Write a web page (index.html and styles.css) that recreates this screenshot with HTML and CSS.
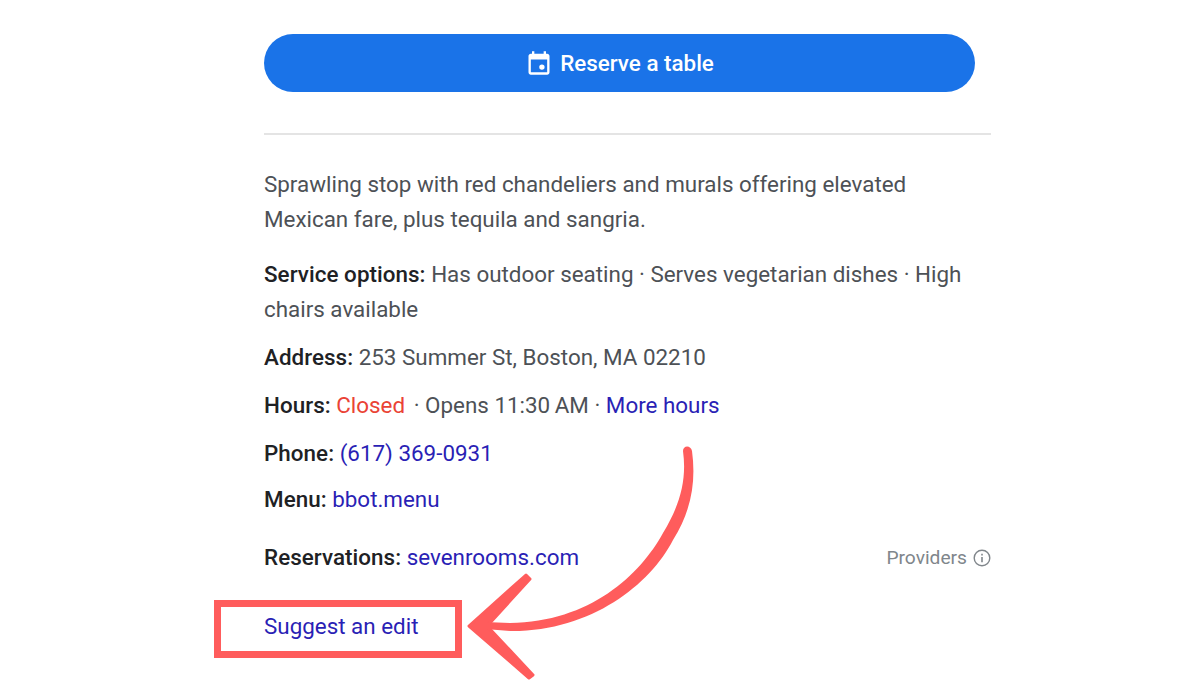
FILE: index.html
```html
<!DOCTYPE html>
<html lang="en">
<head>
    <meta charset="UTF-8">
    <title>Restaurant Details</title>
    <link rel="stylesheet" href="styles.css">
</head>
<body>
    <div class="panel">
        <a class="reserve-btn" href="#">
            <svg class="cal-icon" viewBox="0 0 24 24" width="28" height="28">
                <path fill="#fff" d="M19 4h-1V2h-2v2H8V2H6v2H5c-1.1 0-2 .9-2 2v14c0 1.100.9 2 2 2h14c1.100 0 2-.9 2-2V6c0-1.100-.9-2-2-2zm0 16H5V9h14v11z"/>
                <circle fill="#fff" cx="14.500" cy="15.500" r="2.300"/>
            </svg>
            Reserve a table
        </a>
        <hr class="divider">
        <p class="desc">Sprawling stop with red chandeliers and murals offering elevated Mexican fare, plus tequila and sangria.</p>
        <p class="row service"><b>Service options:</b> Has outdoor seating · Serves vegetarian dishes · High chairs available</p>
        <p class="row"><b>Address:</b> 253 Summer St, Boston, MA 02210</p>
        <p class="row"><b>Hours:</b> <span class="closed">Closed</span> · Opens 11:30&thinsp;AM · <a href="#">More hours</a></p>
        <p class="row"><b>Phone:</b> <a href="#">(617) 369-0931</a></p>
        <p class="row menu"><b>Menu:</b> <a href="#">bbot.menu</a></p>
        <div class="row reservations">
            <p><b>Reservations:</b> <a href="#">sevenrooms.com</a></p>
            <span class="providers">Providers
                <svg viewBox="0 0 18 18" width="18" height="18">
                    <circle cx="9" cy="9" r="7.800" fill="none" stroke="#80868b" stroke-width="1.400"/>
                    <path d="M8.200 8h1.600v5.200H8.200zM8.200 4.800h1.600v1.700H8.200z" fill="#80868b"/>
                </svg>
            </span>
        </div>
        <p class="suggest"><a href="#">Suggest an edit</a></p>
    </div>

    <!-- red annotation on top of the page -->
    <div class="mark-box"></div>
    <svg class="mark-arrow" viewBox="0 0 1200 700" width="1200" height="700">
        <path d="M683 451C683 445 691 445 692 451C696 480 692 510 673 540C650 585 590 632 510 631L485 629L485 622L510 623C590 622 640 575 663 533C680 505 687 480 683 451Z"/>
        <path class="head" d="M526 575L469 626L529 678L533 675L489 628L489 624L530 579Z"/>
    </svg>
</body>
</html>
```

FILE: styles.css
```css
body {
    font-family: Roboto, Arial, sans-serif;
    background-color: #fff;
    margin: 0;
    color: #4d5156;
    font-size: 22.400px;
    overflow: hidden;
}

.panel {
    width: 727px;
    margin-left: 264px;
    padding-top: 33.500px;
}

a {
    color: #2a1fb5;
    text-decoration: none;
}

b {
    color: #202124;
    font-weight: 500;
    letter-spacing: 0.050px;
}

p {
    margin: 0;
}

.reserve-btn {
    display: flex;
    align-items: center;
    justify-content: center;
    gap: 7px;
    width: 711px;
    height: 58px;
    border-radius: 29px;
    background-color: #1a73e8;
    color: #fff;
    font-weight: 500;
    font-size: 22.400px;
}

.divider {
    border: none;
    height: 2px;
    background-color: #e4e4e4;
    margin: 41.500px 0 32px;
}

.desc {
    width: 680px;
    line-height: 35px;
}

.row {
    margin-top: 13px;
    line-height: 35px;
}

.service {
    margin-top: 20px;
}

.menu {
    margin-top: 11px;
}

.closed {
    color: #ea4335;
    margin-right: 3px;
}

.reservations {
    display: flex;
    justify-content: space-between;
    align-items: center;
    margin-top: 23px;
}

.providers {
    display: flex;
    align-items: center;
    gap: 6px;
    color: #80868b;
    font-size: 19.200px;
}

.suggest {
    margin-top: 34px;
    line-height: 35px;
}

.mark-box {
    position: absolute;
    left: 214px;
    top: 600px;
    width: 234px;
    height: 44px;
    border: 7px solid #ff5c5c;
}

.mark-arrow {
    position: absolute;
    left: 0;
    top: 0;
    fill: #ff5c5c;
}

.head {
    stroke: #ff5c5c;
    stroke-width: 3px;
    stroke-linejoin: round;
}
```
